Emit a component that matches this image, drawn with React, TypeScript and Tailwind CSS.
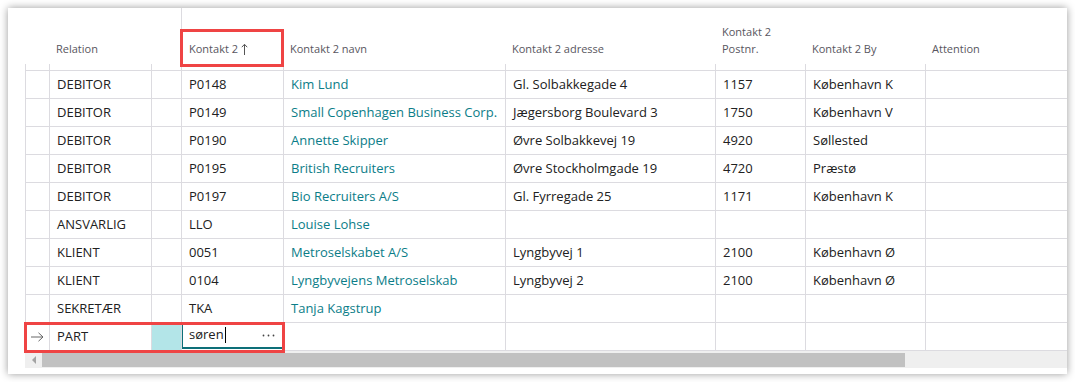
import React from "react";

type Row = {
  rel: string;
  kontakt: string;
  navn: string;
  adresse: string;
  postnr: string;
  by: string;
};

const rows: Row[] = [
  { rel: "DEBITOR", kontakt: "P0148", navn: "Kim Lund", adresse: "Gl. Solbakkegade 4", postnr: "1157", by: "København K" },
  { rel: "DEBITOR", kontakt: "P0149", navn: "Small Copenhagen Business Corp.", adresse: "Jægersborg Boulevard 3", postnr: "1750", by: "København V" },
  { rel: "DEBITOR", kontakt: "P0190", navn: "Annette Skipper", adresse: "Øvre Solbakkevej 19", postnr: "4920", by: "Søllested" },
  { rel: "DEBITOR", kontakt: "P0195", navn: "British Recruiters", adresse: "Øvre Stockholmgade 19", postnr: "4720", by: "Præstø" },
  { rel: "DEBITOR", kontakt: "P0197", navn: "Bio Recruiters A/S", adresse: "Gl. Fyrregade 25", postnr: "1171", by: "København K" },
  { rel: "ANSVARLIG", kontakt: "LLO", navn: "Louise Lohse", adresse: "", postnr: "", by: "" },
  { rel: "KLIENT", kontakt: "0051", navn: "Metroselskabet A/S", adresse: "Lyngbyvej 1", postnr: "2100", by: "København Ø" },
  { rel: "KLIENT", kontakt: "0104", navn: "Lyngbyvejens Metroselskab", adresse: "Lyngbyvej 2", postnr: "2100", by: "København Ø" },
  { rel: "SEKRETÆR", kontakt: "TKA", navn: "Tanja Kagstrup", adresse: "", postnr: "", by: "" },
];

const line = "border-[#dcdbe0]";
const cell = `h-full border-l ${line} pl-[7px] flex items-center whitespace-nowrap overflow-hidden`;

function HeaderCell({ w, children }: { w: string; children?: React.ReactNode }) {
  return (
    <div className={`${w} h-full flex flex-col justify-end`}>
      <div className="pl-[7px] pb-[7px] leading-[17px]">{children}</div>
      <div className={`h-[6px] border-l ${line}`} />
    </div>
  );
}

function DataRow({ r }: { r: Row }) {
  return (
    <div className={`flex h-[28px] border-b ${line}`}>
      <div className={`w-[24px] ${cell}`} />
      <div className={`w-[102px] ${cell}`}>{r.rel}</div>
      <div className={`w-[30px] ${cell}`} />
      <div className={`w-[102px] ${cell}`}>{r.kontakt}</div>
      <div className={`w-[222px] ${cell} text-[#0b7d88]`}>{r.navn}</div>
      <div className={`w-[210px] ${cell}`}>{r.adresse}</div>
      <div className={`w-[90px] ${cell}`}>{r.postnr}</div>
      <div className={`w-[120px] ${cell}`}>{r.by}</div>
      <div className={`w-[142px] ${cell}`} />
    </div>
  );
}

export default function App() {
  return (
    <div className="w-[1075px] h-[382px] bg-white p-2 font-['Open_Sans',sans-serif]">
      <div className="relative w-[1059px] h-[366px] bg-white shadow-[0_0_8px_rgba(0,0,0,0.4)] pl-[17px]">
        {/* header */}
        <div className={`flex h-[63px] border-b ${line} text-[11px] text-[#58565e]`}>
          <HeaderCell w="w-[24px]" />
          <HeaderCell w="w-[102px]">Relation</HeaderCell>
          <HeaderCell w="w-[30px]" />
          <div className={`w-[102px] h-full border-l ${line} flex items-end`}>
            <div className="pl-[7px] pb-[13px] leading-[17px] flex items-center">
              Kontakt 2
              <svg className="ml-[3px]" width="7" height="12" viewBox="0 0 7 12">
                <path d="M3.5 1.5V12M0.8 4.2L3.5 1.3l2.7 2.9" fill="none" stroke="#555" strokeWidth="1" />
              </svg>
            </div>
          </div>
          <HeaderCell w="w-[222px]">Kontakt 2 navn</HeaderCell>
          <HeaderCell w="w-[210px]">Kontakt 2 adresse</HeaderCell>
          <HeaderCell w="w-[90px]">
            Kontakt 2
            <br />
            Postnr.
          </HeaderCell>
          <HeaderCell w="w-[120px]">Kontakt 2 By</HeaderCell>
          <HeaderCell w="w-[142px]">Attention</HeaderCell>
        </div>

        {/* rows */}
        <div className="text-[13px] text-[#212121]">
          {rows.map((r, i) => (
            <DataRow key={i} r={r} />
          ))}
          <div className={`flex h-[28px] border-b ${line}`}>
            <div className={`w-[24px] ${cell} !pl-[4px]`}>
              <svg width="14" height="10" viewBox="0 0 14 10">
                <path d="M1 5h12M8.5 0.8L13 5l-4.5 4.2" fill="none" stroke="#666" strokeWidth="1" />
              </svg>
            </div>
            <div className={`w-[102px] ${cell}`}>PART</div>
            <div className={`w-[30px] h-full border-l ${line} bg-[#b3e5e8]`} />
            <div className={`w-[102px] h-full border-l ${line} pb-[1px]`}>
              <div className="h-full border-l border-b-2 border-[#0d6f78] pl-[6px] pr-[8px] flex items-center">
                <span>søren</span>
                <span className="w-px h-[16px] bg-black ml-[1px]" />
                <svg className="ml-auto" width="13" height="3" viewBox="0 0 13 3">
                  <circle cx="1.5" cy="1.5" r="0.9" fill="#444" />
                  <circle cx="6.5" cy="1.5" r="0.9" fill="#444" />
                  <circle cx="11.5" cy="1.5" r="0.9" fill="#444" />
                </svg>
              </div>
            </div>
            <div className={`w-[222px] ${cell}`} />
            <div className={`w-[210px] ${cell}`} />
            <div className={`w-[90px] ${cell}`} />
            <div className={`w-[120px] ${cell}`} />
            <div className={`w-[142px] ${cell}`} />
          </div>
        </div>

        {/* horizontal scrollbar */}
        <div className="flex h-[17px] bg-[#efefef]">
          <div className="w-[17px] h-full flex items-center justify-center">
            <div className="w-0 h-0 border-y-[4px] border-y-transparent border-r-[4px] border-r-[#a3a3a3]" />
          </div>
          <div className="w-[863px] h-[14px] mt-[2px] bg-[#c1c1c1]" />
        </div>

        {/* annotation boxes */}
        <div className="absolute left-[172px] top-[21px] w-[104px] h-[38px] border-[3px] border-[#ef4444]" />
        <div className="absolute left-[16px] top-[314px] w-[261px] h-[31px] border-[3px] border-[#ef4444]" />
      </div>
    </div>
  );
}
